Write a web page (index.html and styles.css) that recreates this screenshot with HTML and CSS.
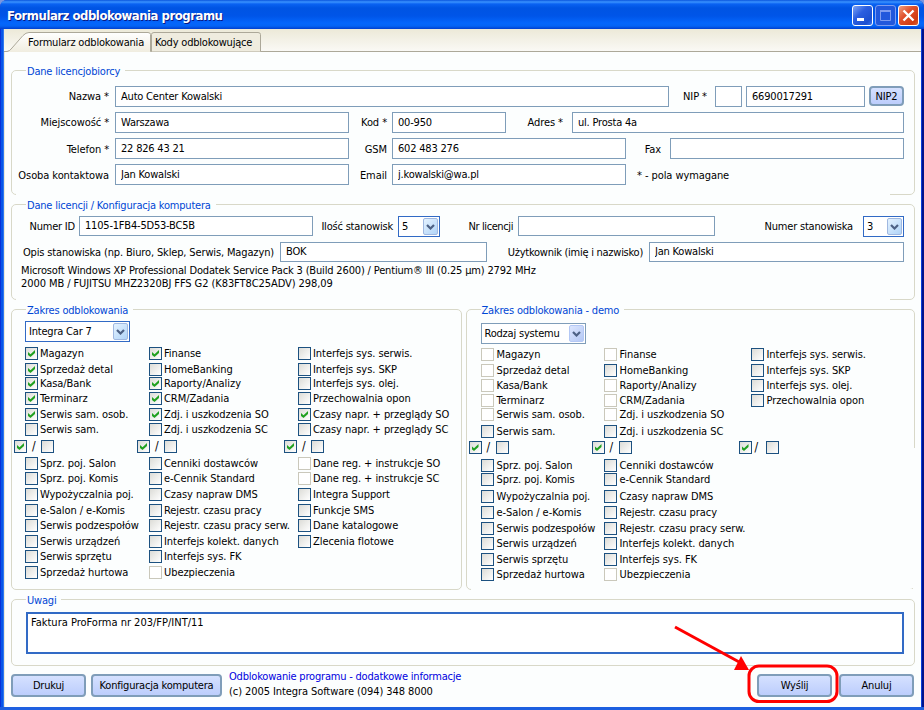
FILE: index.html
```html
<!DOCTYPE html>
<html lang="pl">
<head>
    <meta charset="UTF-8">
    <meta name="viewport" content="width=device-width, initial-scale=1.0">
    <title>Formularz odblokowania programu</title>
    <link rel="stylesheet" href="styles.css">
</head>
<body>
<div class="window">
    <header class="titlebar">
        <h1>Formularz odblokowania programu</h1>
        <span class="win-btn">
            <svg viewBox="0 0 21 21"><rect x="5" y="13" width="7" height="3" fill="#fff"/></svg>
        </span>
        <span class="win-btn win-max">
            <svg viewBox="0 0 21 21"><path d="M5.5 6v9.500h10V6M5 6.500h11" fill="none" stroke="#7e9cf0"/><path d="M5 6h11" stroke="#7e9cf0" stroke-width="2"/></svg>
        </span>
        <span class="win-btn win-close">
            <svg viewBox="0 0 21 21"><path d="M5.500 5.500l10 10M15.500 5.500l-10 10" stroke="#fff" stroke-width="2.400"/></svg>
        </span>
    </header>

    <nav class="tabs">
        <svg class="tab-shape" viewBox="0 0 257 23">
            <path d="M0 22.500H4L7 20L19 6Q22 3.500 25 3.500H144Q146.500 3.500 146.500 5.500V23H0z" fill="url(#tabFill)"/>
            <path d="M0 22.500H3Q6 22 8 19L19 6.500Q22 3.500 25 3.500H144Q146.500 3.500 146.500 5.500V22.500" fill="none" stroke="#aca899"/>
            <path d="M147.500 22.500V5.500Q147.500 3.500 150 3.500H254Q256.500 3.500 256.500 5.500V22.500" fill="#efecdf" stroke="#aca899"/>
            <defs>
                <linearGradient id="tabFill" x1="0" y1="0" x2="0" y2="1">
                    <stop offset="0" stop-color="#ffffff"/>
                    <stop offset="1" stop-color="#f0ede0"/>
                </linearGradient>
            </defs>
        </svg>
        <a class="tab tab-active">Formularz odblokowania</a>
        <a class="tab">Kody odblokowujące</a>
    </nav>

    <main class="content">
        <section class="group group-open licensee">
            <h2>Dane licencjobiorcy</h2>
            <div class="row">
                <label class="l-main">Nazwa *</label><input class="f-name" value="Auto Center Kowalski">
                <label class="l-nip">NIP *</label><input class="f-prefix"><input class="f-nip" value="6690017291">
                <button class="btn btn-nip">NIP2</button>
            </div>
            <div class="row">
                <label class="l-main">Miejscowość *</label><input class="f-mid" value="Warszawa">
                <label class="l-second">Kod *</label><input class="f-code" value="00-950">
                <label class="l-addr">Adres *</label><input class="f-addr" value="ul. Prosta 4a">
            </div>
            <div class="row">
                <label class="l-main drop">Telefon *</label><input class="f-mid" value="22 826 43 21">
                <label class="l-second drop">GSM</label><input class="f-mid" value="602 483 276">
                <label class="l-fax drop">Fax</label><input class="f-mid">
            </div>
            <div class="row">
                <label class="l-main drop">Osoba kontaktowa</label><input class="f-mid" value="Jan Kowalski">
                <label class="l-second drop">Email</label><input class="f-mid" value="j.kowalski@wa.pl">
                <span class="note drop">* - pola wymagane</span>
            </div>
        </section>

        <section class="group group-open license">
            <h2>Dane licencji / Konfiguracja komputera</h2>
            <div class="row">
                <label class="l-id">Numer ID</label><input class="f-mid" value="1105-1FB4-5D53-BC5B">
                <label class="l-count">Ilość stanowisk</label>
                <span class="select focus s-count">5<i><svg viewBox="0 0 9 6"><path d="M1 1l3.500 3.500L8 1"/></svg></i></span>
                <label class="l-lic">Nr licencji</label><input class="f-lic">
                <label class="l-station">Numer stanowiska</label>
                <span class="select focus s-station">3<i><svg viewBox="0 0 9 6"><path d="M1 1l3.500 3.500L8 1"/></svg></i></span>
            </div>
            <div class="row">
                <label class="l-desc">Opis stanowiska (np. Biuro, Sklep, Serwis, Magazyn)</label><input class="f-desc" value="BOK">
                <label class="l-user">Użytkownik (imię i nazwisko)</label><input class="f-user" value="Jan Kowalski">
            </div>
            <p class="sysinfo"><span class="sys1">Microsoft Windows XP Professional Dodatek Service Pack 3 (Build 2600) / Pentium® III (0.25 µm) 2792 MHz</span><br><span class="sys2">2000 MB / FUJITSU MHZ2320BJ FFS G2 (K83FT8C25ADV) 298,09</span></p>
        </section>

        <div class="scopes">
            <section class="group scope">
                <h2>Zakres odblokowania</h2>
                <span class="select focus s-system">Integra Car 7<i><svg viewBox="0 0 9 6"><path d="M1 1l3.500 3.500L8 1"/></svg></i></span>
                <div class="modules">
                    <div class="col">
                        <label><input type="checkbox" checked>Magazyn</label>
                        <label><input type="checkbox" checked>Sprzedaż detal</label>
                        <label><input type="checkbox" checked>Kasa/Bank</label>
                        <label><input type="checkbox" checked>Terminarz</label>
                        <label><input type="checkbox" checked>Serwis sam. osob.</label>
                        <label><input type="checkbox">Serwis sam.</label>
                        <div class="all"><input type="checkbox" checked><b>/</b><input type="checkbox"></div>
                        <label><input type="checkbox">Sprz. poj. Salon</label>
                        <label><input type="checkbox">Sprz. poj. Komis</label>
                        <label><input type="checkbox">Wypożyczalnia poj.</label>
                        <label><input type="checkbox">e-Salon / e-Komis</label>
                        <label><input type="checkbox">Serwis podzespołów</label>
                        <label><input type="checkbox">Serwis urządzeń</label>
                        <label><input type="checkbox">Serwis sprzętu</label>
                        <label><input type="checkbox">Sprzedaż hurtowa</label>
                    </div>
                    <div class="col">
                        <label><input type="checkbox" checked>Finanse</label>
                        <label><input type="checkbox">HomeBanking</label>
                        <label><input type="checkbox" checked>Raporty/Analizy</label>
                        <label><input type="checkbox" checked>CRM/Zadania</label>
                        <label><input type="checkbox" checked>Zdj. i uszkodzenia SO</label>
                        <label><input type="checkbox">Zdj. i uszkodzenia SC</label>
                        <div class="all"><input type="checkbox" checked><b>/</b><input type="checkbox"></div>
                        <label><input type="checkbox">Cenniki dostawców</label>
                        <label><input type="checkbox">e-Cennik Standard</label>
                        <label><input type="checkbox">Czasy napraw DMS</label>
                        <label><input type="checkbox">Rejestr. czasu pracy</label>
                        <label><input type="checkbox">Rejestr. czasu pracy serw.</label>
                        <label><input type="checkbox">Interfejs kolekt. danych</label>
                        <label><input type="checkbox">Interfejs sys. FK</label>
                        <label><input type="checkbox" disabled>Ubezpieczenia</label>
                    </div>
                    <div class="col">
                        <label><input type="checkbox">Interfejs sys. serwis.</label>
                        <label><input type="checkbox">Interfejs sys. SKP</label>
                        <label><input type="checkbox">Interfejs sys. olej.</label>
                        <label><input type="checkbox">Przechowalnia opon</label>
                        <label><input type="checkbox" checked>Czasy napr. + przeglądy SO</label>
                        <label><input type="checkbox">Czasy napr. + przeglądy SC</label>
                        <div class="all all-wide"><input type="checkbox" checked><b>/</b><input type="checkbox"></div>
                        <label><input type="checkbox" disabled>Dane reg. + instrukcje SO</label>
                        <label><input type="checkbox" disabled>Dane reg. + instrukcje SC</label>
                        <label><input type="checkbox">Integra Support</label>
                        <label><input type="checkbox">Funkcje SMS</label>
                        <label><input type="checkbox">Dane katalogowe</label>
                        <label><input type="checkbox">Zlecenia flotowe</label>
                    </div>
                </div>
            </section>

            <section class="group scope demo">
                <h2>Zakres odblokowania - demo</h2>
                <span class="select s-system">Rodzaj systemu<i><svg viewBox="0 0 9 6"><path d="M1 1l3.500 3.500L8 1"/></svg></i></span>
                <div class="modules">
                    <div class="col">
                        <label><input type="checkbox" disabled>Magazyn</label>
                        <label><input type="checkbox" disabled>Sprzedaż detal</label>
                        <label><input type="checkbox" disabled>Kasa/Bank</label>
                        <label><input type="checkbox" disabled>Terminarz</label>
                        <label><input type="checkbox" disabled>Serwis sam. osob.</label>
                        <label><input type="checkbox">Serwis sam.</label>
                        <div class="all"><input type="checkbox" checked><b>/</b><input type="checkbox"></div>
                        <label><input type="checkbox">Sprz. poj. Salon</label>
                        <label><input type="checkbox">Sprz. poj. Komis</label>
                        <label><input type="checkbox">Wypożyczalnia poj.</label>
                        <label><input type="checkbox">e-Salon / e-Komis</label>
                        <label><input type="checkbox">Serwis podzespołów</label>
                        <label><input type="checkbox">Serwis urządzeń</label>
                        <label><input type="checkbox">Serwis sprzętu</label>
                        <label><input type="checkbox">Sprzedaż hurtowa</label>
                    </div>
                    <div class="col">
                        <label><input type="checkbox" disabled>Finanse</label>
                        <label><input type="checkbox">HomeBanking</label>
                        <label><input type="checkbox" disabled>Raporty/Analizy</label>
                        <label><input type="checkbox" disabled>CRM/Zadania</label>
                        <label><input type="checkbox" disabled>Zdj. i uszkodzenia SO</label>
                        <label><input type="checkbox">Zdj. i uszkodzenia SC</label>
                        <div class="all"><input type="checkbox" checked><b>/</b><input type="checkbox"></div>
                        <label><input type="checkbox">Cenniki dostawców</label>
                        <label><input type="checkbox">e-Cennik Standard</label>
                        <label><input type="checkbox">Czasy napraw DMS</label>
                        <label><input type="checkbox">Rejestr. czasu pracy</label>
                        <label><input type="checkbox">Rejestr. czasu pracy serw.</label>
                        <label><input type="checkbox">Interfejs kolekt. danych</label>
                        <label><input type="checkbox">Interfejs sys. FK</label>
                        <label><input type="checkbox" disabled>Ubezpieczenia</label>
                    </div>
                    <div class="col">
                        <label><input type="checkbox">Interfejs sys. serwis.</label>
                        <label><input type="checkbox">Interfejs sys. SKP</label>
                        <label><input type="checkbox">Interfejs sys. olej.</label>
                        <label><input type="checkbox">Przechowalnia opon</label>
                        <div class="all all-last"><input type="checkbox" checked><b>/</b><input type="checkbox"></div>
                    </div>
                </div>
            </section>
        </div>

        <section class="group remarks">
            <h2>Uwagi</h2>
            <textarea>Faktura ProForma nr 203/FP/INT/11</textarea>
        </section>

        <footer class="footer">
            <button class="btn">Drukuj</button>
            <button class="btn btn-wide">Konfiguracja komputera</button>
            <div class="about">
                <a>Odblokowanie programu - dodatkowe informacje</a>
                <span>(c) 2005 Integra Software (094) 348 8000</span>
            </div>
            <button class="btn">Wyślij</button>
            <button class="btn btn-cancel">Anuluj</button>
        </footer>
    </main>

    <!-- red pointer over the send button -->
    <svg class="pointer" viewBox="0 0 170 84">
        <path d="M5 7L71 43" stroke="#f00" stroke-width="3"/>
        <path d="M79 50L64 50L71 36z" fill="#f00"/>
        <rect x="79" y="46" width="88" height="35.500" rx="10" fill="none" stroke="#f00" stroke-width="3"/>
    </svg>
</div>
</body>
</html>
```
FILE: styles.css
```css
* {
    margin: 0;
    padding: 0;
    box-sizing: border-box;
}
body {
    background: #7a96df;
    overflow: hidden;
}
body, input, button, textarea {
    font-family: 'DejaVu Sans Condensed', 'DejaVu Sans', sans-serif;
    font-stretch: condensed;
    font-size: 11px;
    line-height: 13px;
    letter-spacing: -0.2px;
    color: #000;
}
.window {
    position: relative;
    width: 924px;
    height: 710px;
    background: linear-gradient(90deg, #0831d9 1px, #0855e8 1px 3px, #2f78ee 3px 4px, #0a3fd8 4px 922px, #00138c 922px);
    border-radius: 7px 7px 0 0;
    border-bottom: 3px solid #1c5fe0;
    overflow: hidden;
}

/* title bar */
.titlebar {
    display: flex;
    align-items: center;
    height: 29px;
    padding: 2px 5px 0 7px;
    gap: 2px;
    background: linear-gradient(#0a55dd 0, #3a93ff 2px, #0a62f2 4px, #0054e3 8px, #0055e8 16px, #0466fc 23px, #0464f5 26px, #003fcf 29px);
}
.titlebar h1 {
    flex: 1;
    font-size: 13px;
    line-height: 18px;
    font-weight: bold;
    letter-spacing: -0.48px;
    color: #fff;
    text-shadow: 1px 1px 0 #0a1883;
}
.win-btn {
    width: 21px;
    height: 21px;
    border: 1px solid #fff;
    border-radius: 3px;
    background: linear-gradient(135deg, #7ea4f5, #2b5ee0 40%, #1c4fd0 80%, #3b76f0);
}
.win-btn svg {
    display: block;
    width: 21px;
    height: 21px;
    margin: -1px;
}
.win-max {
    border-color: #7e9cf0;
    background: #2258dc;
}
.win-close {
    background: linear-gradient(135deg, #f0a080, #e0502c 40%, #d03c12 80%, #d86030);
}

/* tabs */
.tabs {
    position: relative;
    display: flex;
    height: 23px;
    margin: 0 3px 0 4px;
    padding: 7px 0 0 24px;
    gap: 12px;
    background: linear-gradient(#ece9d8, #faf9f5);
    border-bottom: 1px solid #aca899;
}
.tab-shape {
    position: absolute;
    left: 0;
    top: 0;
    width: 257px;
    height: 23px;
}
.tab {
    position: relative;
    white-space: nowrap;
}
.tab-active {
    width: 115px;
}

/* form groups */
.content {
    height: 655px;
    margin: 0 3px 0 4px;
    padding: 18px 6px 0 6px;
    background: #fcfefe;
    border-left: 1px solid #ece9d8;
}
.group {
    position: relative;
    width: 904px;
    border: 1px solid #d8d8c8;
    border-radius: 5px;
    margin-bottom: 9px;
}
.group h2 {
    position: absolute;
    left: 14px;
    top: -6px;
    padding: 0 5px 0 1px;
    background: #fcfefe;
    font-size: 11px;
    font-weight: normal;
    color: #0046d5;
    white-space: nowrap;
}
.group-open::after {
    content: '';
    position: absolute;
    left: 4px;
    right: 24px;
    bottom: -1px;
    height: 1px;
    background: #fcfefe;
}
.row {
    display: flex;
    align-items: flex-start;
}
.row label, .note {
    flex: none;
    text-align: right;
    white-space: nowrap;
    padding-top: 4px;
}
.row .drop {
    padding-top: 5px;
}
.row input {
    flex: none;
    height: 21px;
    padding: 0 5px 1px;
    border: 1px solid #7f9db9;
    background: #fff;
}
.licensee {
    height: 125px;
    padding-top: 15px;
}
.licensee .row {
    height: 26px;
}
.licensee label, .licensee .note {
    letter-spacing: -0.08px;
}
.l-main { width: 97px; margin-right: 6px; }
.l-second { width: 38px; margin-right: 5px; }
.l-nip { width: 38px; margin-right: 8px; }
.l-addr { width: 57px; margin-right: 9px; }
.l-fax { width: 35px; margin-right: 9px; }
.note { margin-left: 11px; }
.f-name { width: 554px; }
.f-prefix { width: 27px; margin-right: 4px; }
.f-nip { width: 119px; margin-right: 4px; }
.f-mid { width: 234px; }
.f-code { width: 114px; }
.f-addr { width: 332px; }

.license {
    height: 96px;
    padding-top: 11px;
}
.license .row {
    height: 26px;
}
.license .row input {
    height: 20px;
}
.l-id { width: 63px; margin-right: 4px; }
.l-count { width: 80px; margin-right: 5px; }
.l-lic { width: 73px; margin-right: 5px; letter-spacing: -0.4px; }
.l-station { width: 138px; margin-right: 10px; }
.l-desc { width: 262px; margin-right: 6px; letter-spacing: -0.14px; }
.l-user { width: 156px; margin-right: 6px; letter-spacing: -0.26px; }
.f-lic { width: 197px; }
.f-desc { width: 207px; }
.f-user { width: 255px; }
.sysinfo {
    margin: -4px 0 0 9px;
    white-space: nowrap;
}
.sys1 { letter-spacing: -0.16px; }
.sys2 { letter-spacing: -0.08px; }

.select {
    flex: none;
    display: flex;
    justify-content: space-between;
    height: 21px;
    padding: 1px 1px 1px 3px;
    border: 1px solid #7f9db9;
    background: #fff;
    line-height: 18px;
}
.select.focus {
    border-color: #316ac5;
}
.select i {
    display: flex;
    align-items: center;
    justify-content: center;
    width: 15px;
    height: 17px;
    border: 1px solid #b4c8f5;
    border-radius: 2px;
    background: linear-gradient(135deg, #dce6fe, #b4c8f5);
}
.select.focus i {
    border-color: #a0b8e0;
    background: linear-gradient(135deg, #e4f2ff, #b0d4f8);
}
.select svg {
    width: 9px;
    height: 6px;
}
.select path {
    fill: none;
    stroke: #4d6185;
    stroke-width: 2.2;
}
.s-count { width: 42px; }
.s-station { width: 41px; }
.s-system { width: 105px; }

/* module lists */
.scopes {
    display: flex;
    gap: 4px;
}
.scope {
    width: 451px;
    height: 281px;
    padding: 11px 0 0 13px;
}
.modules {
    display: grid;
    grid-template-columns: 124px 149px 150px;
    margin-top: 5px;
    letter-spacing: -0.06px;
}
.col {
    display: grid;
    grid-template-rows: 16px 14px 15px 16px 15px 17px 17px 15px 16px 16px 15px 16px 15px 16px 15px;
    align-content: start;
}
.col label {
    display: flex;
    gap: 2px;
    height: 13px;
    line-height: 13px;
    white-space: nowrap;
}
.col input {
    appearance: none;
    flex: none;
    width: 13px;
    height: 13px;
    border: 1px solid #1c5180;
    background: linear-gradient(135deg, #dcdcd7, #fff);
}
.col input:checked::before {
    content: '';
    display: block;
    width: 7px;
    height: 7px;
    margin: 2px;
    background: #21a121;
    clip-path: polygon(0 2px, 2.5px 4.200px, 7px 0, 7px 3px, 2.500px 7px, 0 5px);
}
.col input:disabled {
    border-color: #cac8bb;
    background: #fff;
}
.all {
    display: flex;
    height: 13px;
    margin-left: -11px;
}
.all b {
    width: 14px;
    padding-left: 5px;
    font-size: 12px;
    font-weight: normal;
}
.col + .col .all {
    margin-left: -12px;
}
.col .all.all-wide, .col + .col .all-wide {
    margin-left: -14px;
}
.demo {
    width: 450px;
    padding: 13px 0 0 14px;
}
.demo .modules {
    grid-template-columns: 123px 147px 150px;
    margin-top: 4px;
}
.demo .col {
    grid-template-rows: 16px 15px 15px 14px 17px 16px 18px 14px 17px 16px 16px 15px 16px 15px 15px;
}
.demo .col label {
    gap: 3px;
}
.demo .col .all {
    margin-left: -12px;
}
.demo .all-last {
    grid-row: 7;
}
.demo .all-last b {
    padding-left: 3px;
}
/* lower right part of the frame is left open */
.demo::after {
    content: '';
    position: absolute;
    left: 4px;
    right: -1px;
    bottom: -1px;
    height: 1px;
    background: #fcfefe;
}
.demo::before {
    content: '';
    position: absolute;
    right: -1px;
    bottom: -1px;
    width: 2px;
    height: 142px;
    background: #fcfefe;
}

/* remarks and footer */
.remarks {
    height: 67px;
    margin-bottom: 8px;
    padding: 12px 0 0 14px;
}
.remarks textarea {
    display: block;
    width: 878px;
    height: 42px;
    padding: 2px 3px;
    border: 2px solid #316ac5;
    background: #fff;
    letter-spacing: 0;
    resize: none;
}
.footer {
    display: flex;
    width: 903px;
}
.btn {
    width: 75px;
    height: 23px;
    border: 2px solid #7f9db9;
    border-radius: 4px;
    background: linear-gradient(#d5e1ff, #bccdfc);
    text-align: center;
}
.btn-nip {
    width: 35px;
    height: 20px;
}
.btn-wide {
    width: 131px;
    margin-left: 5px;
}
.about {
    flex: 1;
    display: flex;
    flex-direction: column;
    gap: 2px;
    margin: -4px 0 0 7px;
    white-space: nowrap;
}
.about a {
    color: #0000e0;
}
.about span {
    letter-spacing: -0.08px;
}
.btn-cancel {
    margin-left: 7px;
}
.pointer {
    position: absolute;
    left: 670px;
    top: 620px;
    width: 170px;
    height: 84px;
}
```
